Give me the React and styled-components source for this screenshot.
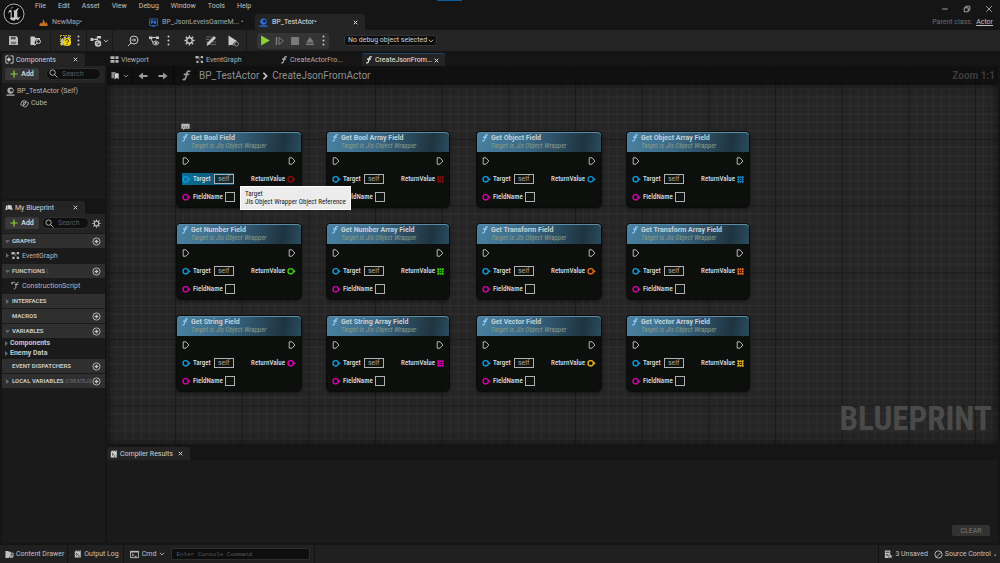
import React, { useState } from 'react'
import styled, { createGlobalStyle, css } from 'styled-components'

const GlobalStyle = createGlobalStyle`
  * {
    box-sizing: border-box;
  }

  html, body, #root {
    height: 100%;
    margin: 0;
  }

  body {
    background: #151515;
    color: #c0c0c0;
    font-family: Roboto, "Liberation Sans", sans-serif;
    font-size: 7px;
    line-height: 8px;
    overflow: hidden;
  }

  button, input, select {
    font: inherit;
    color: inherit;
    margin: 0;
    padding: 0;
    border: 0;
    background: none;
  }

  input::placeholder {
    color: #5a5a5a;
    opacity: 1;
  }

  svg {
    display: block;
    flex: none;
  }
`

const condensed = '"Roboto Condensed", "Liberation Sans Narrow", Roboto, sans-serif'

/* ---------- icons ---------- */

const Svg = ({ size = 10, h, box = '0 0 20 20', children }) => (
    <svg width={size} height={h || size} viewBox={box} fill="none" stroke="currentColor" strokeWidth="2" aria-hidden="true">
        {children}
    </svg>
)

const UnrealLogo = () => (
    <Svg size={22} box="0 0 66 66">
        <circle cx="33" cy="33" r="30" fill="#0c0c0c" stroke="#b0b0b0" strokeWidth="3" />
        <path
            d="M32 13C24 16 16 23 15 33c3-6 6-7 8-5v15c0 3-2 4-4 3 4 5 9 7 15 7l5-5 5 4c4-3 7-7 8-13-4 5-7 6-9 3V24c1-4 3-7 6-9-6 1-10 4-13 8-2-2-4-1-5 0 2 1 2 2 2 5v14c-2 3-7 2-7-1V26c0-4-2-6-5-5 1-3 3-6 6-8z"
            fill="#c8c8c8"
            stroke="none"
        />
    </Svg>
)

const ChevronDown = ({ size = 7 }) => <Svg size={size}><path d="M3 6l7 7 7-7" strokeWidth="3" /></Svg>
const CloseIcon = ({ size = 5 }) => <Svg size={size}><path d="M3 3l14 14M17 3L3 17" strokeWidth="4" /></Svg>
const DotsIcon = () => (
    <Svg size={3} h={11} box="0 0 6 22">
        <g fill="currentColor" stroke="none">
            <circle cx="3" cy="3" r="2" /><circle cx="3" cy="11" r="2" /><circle cx="3" cy="19" r="2" />
        </g>
    </Svg>
)
const LandscapeIcon = () => (
    <Svg size={9}><path d="M1 18v-4l4-4 2 3 3-11 4 11 2-4 3 5v4z" fill="#c9701a" stroke="none" /></Svg>
)
const LevelIcon = () => (
    <Svg size={9}>
        <rect x="1" y="2" width="18" height="15" rx="1" stroke="#2f63c8" />
        <path d="M5 13V6h4v4H5M12 6v7M15 6v7M12 10h3M7 18h6" stroke="#3d7cf0" />
    </Svg>
)
const ActorIcon = ({ color = '#2f6fe0', size = 9 }) => (
    <Svg size={size}>
        <circle cx="10" cy="8" r="7" fill={color} stroke="none" />
        <circle cx="12" cy="7" r="3" fill="#16191f" stroke="none" />
        <path d="M1 18h18" stroke={color} strokeWidth="3" />
    </Svg>
)
const SaveIcon = () => (
    <Svg size={11}>
        <path d="M2 2h13l3 3v13H2z" fill="currentColor" stroke="none" />
        <path d="M5 3h9v5H5z" fill="#555" stroke="none" />
        <path d="M5 12h10v5H5z" fill="#777" stroke="none" />
    </Svg>
)
const BrowseIcon = () => (
    <Svg size={12} box="0 0 24 22">
        <path d="M1 2h8l2 3h9v4a6 6 0 0 0-8 10H1z" fill="currentColor" stroke="none" />
        <circle cx="17" cy="12" r="4" />
        <path d="M14 15l-5 5" />
    </Svg>
)
const CompileIcon = () => (
    <Svg size={13} box="0 0 26 26">
        <path d="M3 3h20v19H3z" stroke="#d6b91c" strokeDasharray="3 2" />
        <path d="M4 22V11l5-4v15zM10 9V5h4v4zM17 5h5v4h-5z" fill="#b9b9b9" stroke="none" />
        <circle cx="16" cy="16" r="8" fill="#f2cf12" stroke="none" />
        <path d="M13 14c0-4 6-4 6 0 0 2-3 2-3 4M16 20v2" stroke="#222" />
    </Svg>
)
const DiffIcon = () => (
    <Svg size={13} h={12} box="0 0 26 24">
        <path d="M7 9h3l4-4M10 9h6" />
        <path d="M1 6h6v6H1zM14 2h8v5h-8z" fill="currentColor" stroke="none" />
        <circle cx="16" cy="17" r="5" strokeWidth="3" />
        <path d="M12 20l8-7" strokeWidth="3" />
    </Svg>
)
const FindIcon = () => (
    <Svg size={12} box="0 0 24 24">
        <circle cx="14" cy="10" r="8" />
        <path d="M8 16l-6 6M9 10h8M14 7l3 3-3 3" />
    </Svg>
)
const HideIcon = () => (
    <Svg size={12} box="0 0 24 24">
        <path d="M2 3h7v5H2zM16 3h6v5h-6z" fill="currentColor" stroke="none" />
        <path d="M9 5h7M6 8l4 7" />
        <path d="M9 16c3-5 10-5 13 0-3 5-10 5-13 0z" />
        <circle cx="16" cy="16" r="2" fill="currentColor" />
    </Svg>
)
const GearIcon = ({ size = 11 }) => (
    <Svg size={size} box="0 0 24 24">
        <circle cx="12" cy="12" r="6" strokeWidth="3" />
        <path d="M12 1v4M12 19v4M1 12h4M19 12h4M4 4l3 3M17 17l3 3M4 20l3-3M17 7l3-3" strokeWidth="3" />
    </Svg>
)
const DefaultsIcon = () => (
    <Svg size={12} box="0 0 24 24">
        <path d="M2 4h12M2 9h7M2 14h4M14 14h8M11 19h11" stroke="#666" />
        <path d="M3 22l2-7L18 2l4 4L9 19z" fill="currentColor" stroke="none" />
    </Svg>
)
const SimulateIcon = () => (
    <Svg size={12} box="0 0 24 24">
        <path d="M3 1l17 11-7 4v3l-10 2z" fill="currentColor" stroke="none" />
        <circle cx="19" cy="18" r="4" fill="#242424" stroke="#888" />
        <path d="M11 20h4" stroke="#888" />
    </Svg>
)
const PlayIcon = () => <Svg size={11}><path d="M2 1l16 9-16 9z" fill="#8bd233" stroke="none" /></Svg>
const StepIcon = () => <Svg size={10}><path d="M3 2v16" strokeWidth="3" /><path d="M8 3l9 7-9 7z" /></Svg>
const StopIcon = () => <Svg size={10}><path d="M2 2h16v16H2z" fill="currentColor" stroke="none" /></Svg>
const EjectIcon = () => <Svg size={10}><path d="M10 2l8 11H2zM2 15h16v3H2z" fill="currentColor" stroke="none" /></Svg>
const ComponentsIcon = () => (
    <Svg size={9}>
        <path d="M8 2H2v16h6M12 2h6v16h-6" />
        <path d="M6 10h7M10 6l-4 4 4 4" strokeWidth="3" />
    </Svg>
)
const PlusIcon = () => <Svg size={8}><path d="M10 1v18M1 10h18" stroke="#8bd233" strokeWidth="3" /></Svg>
const SearchIcon = () => <Svg size={9}><circle cx="8" cy="8" r="6" /><path d="M12 12l7 7" /></Svg>
const CubeIcon = () => (
    <Svg size={9}>
        <path d="M1 12l4-7 5-2 4 3-3 6-5 3zM7 15l3 3 5-2 4-7-4-3M5 5l4 3 5-2M9 8l-3 7" />
    </Svg>
)
const BookIcon = () => (
    <Svg size={8}><path d="M1 15l2-11h4l-1 11zM7 13l1-11 4 1v10zM12 14V3h4l3 12z" fill="currentColor" stroke="none" /></Svg>
)
const AddCircleIcon = () => (
    <Svg size={9}><circle cx="10" cy="10" r="8" /><path d="M10 6v8M6 10h8" strokeWidth="3" /></Svg>
)
const GraphIcon = () => (
    <Svg size={9}>
        <path d="M1 2h7v6H1zM13 2h5v5h-5zM3 13h5v5H3zM13 13h5v5h-5z" fill="currentColor" stroke="none" />
        <path d="M8 5h5M8 6l5 8" strokeDasharray="2 2" />
    </Svg>
)
const ViewportIcon = () => (
    <Svg size={9}><path d="M1 3h9v6H1zM12 3h7v6h-7zM1 11h9v6H1zM12 11h7v6h-7z" fill="currentColor" stroke="none" /></Svg>
)
const FunctionIcon = ({ size = 8 }) => (
    <Svg size={size}><path d="M17 3c-4-3-6 0-7 5-1 6-2 11-7 9M5 8h10" strokeWidth="3" /></Svg>
)
const ScriptIcon = () => (
    <Svg size={9}><path d="M2 5c3-3 5-3 8 0M17 3c-5 1-6 5-6 8 0 4-1 7-5 7M8 8h8" /><path d="M1 3h3v4H1z" fill="currentColor" stroke="none" /></Svg>
)
const BookmarkIcon = () => (
    <Svg size={9}><path d="M1 2h9v3H7v11H1z" fill="#888" stroke="none" /><path d="M8 5h9v14l-4-4-5 4z" fill="#d0d0d0" stroke="none" /></Svg>
)
const ArrowIcon = ({ right }) => (
    <Svg size={10}>
        <path
            d={right ? 'M1 8h9V3l9 7-9 7v-5H1z' : 'M19 8h-9V3l-9 7 9 7v-5h9z'}
            fill="currentColor"
            stroke="none"
        />
    </Svg>
)
const LogIcon = () => (
    <Svg size={8}>
        <path d="M2 4h2V1h3v3h2V1h3v3h2V1h3v18H2z" fill="currentColor" stroke="none" />
        <path d="M5 8l4 3-4 3M10 15h4" stroke="#222" />
    </Svg>
)
const DrawerIcon = () => (
    <Svg size={9}>
        <path d="M1 2h6l2 2h4v5l-4 9H1z" fill="currentColor" stroke="none" />
        <path d="M10 7h8v8h-6z" /><circle cx="14" cy="14" r="3" />
    </Svg>
)
const CmdIcon = () => (
    <Svg size={9}><path d="M1 3h18v14H1z" /><path d="M1 4h18" strokeWidth="3" /><path d="M4 8l4 3-4 3M10 14h5" /></Svg>
)
const UnsavedIcon = () => (
    <Svg size={9}>
        <path d="M2 1h12v9l-4 8H2z" fill="currentColor" stroke="none" />
        <path d="M4 5h8M4 11h5" stroke="#222" />
        <path d="M14 8l2 4h4l-3 3 1 4-4-2-4 2 1-4-3-3h4z" fill="currentColor" stroke="#222" strokeWidth="1" />
    </Svg>
)
const SourceIcon = () => <Svg size={9}><circle cx="10" cy="10" r="8" /><path d="M5 16L16 5" /></Svg>
const ResizeIcon = () => <Svg size={3}><path d="M20 4v16H4z" fill="#777" stroke="none" /></Svg>
const CommentIcon = () => (
    <Svg size={9} h={8} box="0 0 27 24">
        <path d="M1 2h25v15H11l-3 5-2-5H1z" fill="#b8b8b8" stroke="none" />
        <path d="M6 12h3M12 12h3M18 12h3" stroke="#444" strokeWidth="3" />
    </Svg>
)
const ExecPin = () => (
    <Svg size={8}><path d="M3 2h7l7 8-7 8H3z" stroke="#e0e0e0" strokeLinejoin="round" /></Svg>
)
const RoundPin = ({ color }) => (
    <Svg size={9} box="0 0 27 27">
        <circle cx="11" cy="13" r="8" stroke={color} strokeWidth="4" />
        <path d="M20 8l6 5-6 5z" fill={color} stroke="none" />
    </Svg>
)
const ArrayPin = ({ color }) => (
    <Svg size={7} box="0 0 21 21">
        <g fill={color} stroke="none">
            <path d="M1 1h5v5H1zM8 1h5v5H8zM15 1h5v5h-5zM1 8h5v5H1zM15 8h5v5h-5zM1 15h5v5H1zM8 15h5v5H8zM15 15h5v5h-5z" />
            <path d="M3 3h15v15H3zM7 7v7h7V7z" fillRule="evenodd" opacity="0.6" />
            <path d="M9 9h3v3H9z" />
        </g>
    </Svg>
)

/* ---------- shell ---------- */

const Page = styled.div`
  height: 100vh;
  display: flex;
  flex-direction: column;
`

const Header = styled.header`
  position: relative;
  display: flex;
  height: 30px;

  .logo {
    padding: 3px;
  }

  .left {
    flex: 1;
    display: flex;
    flex-direction: column;
    justify-content: space-between;
    padding-left: 7px;
  }
`

const LoadingBar = styled.span`
  position: absolute;
  top: 0;
  left: 437px;
  width: 25px;
  height: 1px;
  background: #0f5c9c;
`

const Menu = styled.nav`
  display: flex;
  gap: 12px;
  padding-top: 2px;
`

const DocTabs = styled.div`
  display: flex;
`

const DocTab = styled.button`
  display: flex;
  align-items: center;
  gap: 4px;
  width: 110px;
  height: 16px;
  padding: 0 7px 0 4px;
  border-radius: 3px 3px 0 0;
  color: ${({ $active }) => ($active ? '#e0e0e0' : '#a8a8a8')};
  background: ${({ $active }) => ($active ? '#242424' : 'none')};

  svg:last-child:not(:first-child) {
    margin-left: auto;
  }
`

const WindowSide = styled.div`
  display: flex;
  flex-direction: column;
  align-items: flex-end;
  justify-content: space-between;
  padding: 5px 7px 4px 0;

  div {
    display: flex;
    gap: 14px;
  }

  p {
    margin: 0;
    color: #6c6c6c;
  }

  a {
    color: #c0c0c0;
    margin-left: 2px;
  }
`

const Toolbar = styled.div`
  display: flex;
  align-items: center;
  height: 21px;
  background: #242424;
`

const ToolGroup = styled.div`
  display: flex;
  align-items: center;
  height: 21px;
  gap: ${({ $gap }) => $gap || 0}px;
  padding: ${({ $pad }) => $pad};
  border-right: ${({ $line }) => ($line ? '1px solid #181818' : '0')};
`

const ToolButton = styled.button`
  display: flex;
  align-items: center;
  justify-content: center;
  width: ${({ $w }) => $w || 20}px;
  height: 16px;
  color: ${({ $dim }) => ($dim ? '#7a7a7a' : '#c8c8c8')};
`

const PlayGroup = styled.div`
  display: flex;
  gap: 1px;
  margin: 0 7px 0 10px;
  padding: 0 1px;
  background: #343434;
  border-radius: 3px;
`

const DebugSelect = styled.label`
  position: relative;
  display: flex;
  align-items: center;
  margin-left: 8px;

  select {
    appearance: none;
    width: 93px;
    height: 11px;
    padding: 0 3px;
    background: #0e0e0e;
    border: 1px solid #333;
    border-radius: 3px;
    line-height: 9px;
    color: #d0d0d0;
  }

  svg {
    position: absolute;
    right: 3px;
  }
`

const Main = styled.main`
  flex: 1;
  min-height: 0;
  display: grid;
  grid-template-columns: 103px minmax(0, 1fr);
  gap: 2px;
  padding: 2px;
`

const Sidebar = styled.aside`
  display: grid;
  grid-template-columns: minmax(0, 1fr);
  grid-template-rows: 3fr 7fr;
  gap: 2px;
  min-height: 0;
`

const Content = styled.section`
  display: flex;
  flex-direction: column;
  gap: 3px;
  min-width: 0;
`

const TabStrip = styled.div`
  display: flex;
  gap: 2px;
`

const PanelTab = styled.button`
  display: flex;
  align-items: center;
  gap: 2px;
  width: 83px;
  height: 13px;
  padding: 0 7px 0 3px;
  border-radius: 3px 3px 0 0;
  white-space: nowrap;
  color: ${({ $active }) => ($active ? '#d0d0d0' : '#b0b0b0')};
  background: ${({ $active }) => ($active ? '#242424' : 'none')};
  ${({ $focused }) => $focused && css`
    color: #e8e8e8;
    border-top: 1px solid #1c4468;
  `}

  svg:last-child:not(:first-child) {
    margin-left: auto;
  }
`

/* ---------- sidebar ---------- */

const Panel = styled.div`
  display: flex;
  flex-direction: column;
  flex: 1;
  min-height: 0;
`

const PanelTools = styled.div`
  display: flex;
  align-items: center;
  gap: ${({ $tight }) => ($tight ? 3 : 7)}px;
  height: ${({ $tight }) => ($tight ? 19 : 17)}px;
  padding: 0 4px ${({ $tight }) => ($tight ? 1 : 2)}px 3px;
  background: #242424;
`

const AddButton = styled.button`
  display: flex;
  flex: none;
  align-items: center;
  justify-content: center;
  gap: 3px;
  width: 34px;
  height: 12px;
  background: #383838;
  border-radius: 2px;
  color: #e0e0e0;
  font-weight: 500;
`

const SearchBox = styled.label`
  display: flex;
  align-items: center;
  gap: 4px;
  flex: 1;
  min-width: 0;
  height: 12px;
  padding: 0 2px;
  background: #0f0f0f;
  border: 1px solid #2e2e2e;
  border-radius: 6px;

  input {
    width: 100%;
    min-width: 0;
  }
`

const Tree = styled.div`
  flex: 1;
  padding: 2px 0;
  background: #1a1a1a;
`

const TreeRow = styled.div`
  display: flex;
  align-items: center;
  gap: 2px;
  height: ${({ $h }) => $h || 12}px;
  padding-left: ${({ $indent }) => $indent || 4}px;
  font-weight: ${({ $bold }) => ($bold ? 700 : 400)};
  color: ${({ $bold }) => ($bold ? '#c8c8c8' : '#b8b8b8')};
`

const Sections = styled.div`
  flex: 1;
  background: #1a1a1a;
`

const SectionHead = styled.div`
  display: flex;
  align-items: center;
  gap: 3px;
  height: 14px;
  margin-top: 1px;
  padding: 0 4px 0 3px;
  background: #2f2f2f;
  color: #c4c4c4;
  font-size: 6px;
  font-weight: 700;

  .name {
    flex: 1;
    min-width: 0;
    white-space: nowrap;
  }

  em {
    color: #707070;
    font-family: ${condensed};
    font-style: normal;
    font-weight: 400;
  }

  button {
    color: #c0c0c0;
  }
`

const Twisty = styled.span`
  flex: none;
  width: 4px;
  color: #6a6a6a;
`

const Arrow = ({ open, hidden }) => (
    <Twisty>
        {!hidden && (
            <Svg size={5}>
                <path d={open ? 'M0 5h20L10 16z' : 'M4 0v20l12-10z'} fill="currentColor" stroke="none" />
            </Svg>
        )}
    </Twisty>
)

/* ---------- graph ---------- */

const GraphPanel = styled.div`
  position: relative;
  flex: 1;
  display: flex;
  flex-direction: column;
  overflow: hidden;
  background: #252525;

  .grid {
    position: absolute;
    inset: 0;
  }
`

const Breadcrumb = styled.div`
  position: relative;
  display: flex;
  align-items: center;
  height: 19px;
  padding-right: 3px;
  background: rgba(10, 10, 10, 0.75);
  color: #8f8f8f;
  font-size: 10px;
  line-height: 12px;

  .chevron {
    margin: 0 3px 0 2px;
    color: #d0d0d0;
  }

  .zoom {
    margin-left: auto;
    color: #3c3c3c;
    font-weight: 700;
  }
`

const CrumbGroup = styled.div`
  display: flex;
  align-items: center;
  justify-content: center;
  gap: ${({ $gap }) => $gap}px;
  width: ${({ $w }) => $w}px;
  height: 19px;
  border-right: ${({ $line }) => ($line ? '1px solid #070707' : '0')};
  color: #9a9a9a;

  button {
    display: flex;
    align-items: center;
    gap: 3px;
  }
`

const Canvas = styled.div`
  position: relative;
  flex: 1;
  box-shadow: inset 0 0 14px rgba(0, 0, 0, 0.45);
`

const Watermark = styled.div`
  position: absolute;
  right: 6px;
  bottom: 5px;
  color: #4a4a4a;
  font-family: ${condensed};
  font-size: 33px;
  line-height: 40px;
  font-weight: 700;
`

const NodeBox = styled.article`
  position: absolute;
  left: ${({ $x }) => $x}px;
  top: ${({ $y }) => $y}px;
  width: ${({ $array }) => ($array ? 122 : 124)}px;
  padding-bottom: 1px;
  background: rgba(10, 13, 10, 0.92);
  border-radius: 4px;
  box-shadow: 0 0 0 1px #0b0b0b, 0 1px 4px rgba(0, 0, 0, 0.7);
  color: #dcdcdc;
  font-family: ${condensed};
`

const NodeHead = styled.header`
  display: flex;
  gap: 2px;
  height: 20px;
  padding: 2px 4px;
  border-radius: 4px 4px 0 0;
  background: linear-gradient(100deg, #4a80a0 0%, #3b6a88 40%, #1f3440 85%, #2a4c60 100%);
  box-shadow: inset 0 1px 0 #5c8ca8;
  color: #8ccbf5;

  h3 {
    margin: 0;
    font-family: Roboto, sans-serif;
    font-size: 7px;
    font-weight: 700;
    color: #c4d0d6;
  }

  p {
    margin: 0;
    font-style: italic;
    color: #8a9c84;
    white-space: nowrap;
  }
`

const PinRow = styled.div`
  display: flex;
  align-items: center;
  justify-content: space-between;
  height: 18px;
  padding: 0 5px;
`

const Pin = styled.label`
  display: flex;
  align-items: center;
  gap: 2px;
  height: 12px;
  font-weight: 500;
  ${({ $hover }) => $hover && css`
    background: linear-gradient(90deg, #0c6f98, #0b4c68);
  `}

  .label {
    min-width: 19px;
  }
`

const PinInput = styled.input`
  width: ${({ $w }) => $w}px;
  height: 10px;
  padding: 0 3px;
  border: 1px solid #b0b0b0;
  background: rgba(20, 24, 20, 0.6);
  color: #a8a8a8;
  font-family: Roboto, sans-serif;
  font-weight: 400;
  line-height: 8px;
`

const Bubble = styled.div`
  position: absolute;
  left: 74px;
  top: 38px;
`

const Tooltip = styled.div`
  position: absolute;
  left: 133px;
  top: 101px;
  padding: 3px 4px;
  border: 1px solid #fff;
  background: #ececec;
  color: #222;
  font-family: ${condensed};
  white-space: nowrap;
`

/* ---------- bottom ---------- */

const Results = styled.div`
  flex: none;

  .body {
    display: flex;
    justify-content: flex-end;
    align-items: flex-end;
    height: 83px;
    padding: 7px 8px;
    background: #1a1a1a;
  }
`

const ClearButton = styled.button`
  width: 38px;
  height: 11px;
  border-radius: 2px;
  background: #333;
  color: #777;
`

const StatusBar = styled.footer`
  display: flex;
  height: 18px;
  background: #202020;
`

const StatusItem = styled.div`
  display: flex;
  align-items: center;
  gap: ${({ $gap }) => $gap || 2}px;
  padding: ${({ $pad }) => $pad || '0 3px 0 5px'};
  border-right: ${({ $line }) => ($line ? '1px solid #131313' : '0')};
  border-left: ${({ $lineLeft }) => ($lineLeft ? '1px solid #131313' : '0')};
  margin-left: ${({ $lineLeft }) => ($lineLeft ? 'auto' : '0')};

  button {
    display: flex;
    align-items: center;
    gap: ${({ $btnGap }) => $btnGap || 2}px;
    white-space: nowrap;
  }
`

const ConsoleInput = styled.input`
  width: 139px;
  height: 12px;
  padding: 0 4px;
  background: #0e0e0e;
  border: 1px solid #2e2e2e;
  border-radius: 2px;
  font-family: "Liberation Mono", monospace;
  font-size: 6px;
`

const menuItems = ['File', 'Edit', 'Asset', 'View', 'Debug', 'Window', 'Tools', 'Help']

const nodes = [
    ['Bool', '#8e0d0d'],
    ['Object', '#0f8fd0'],
    ['Number', '#38d010'],
    ['Transform', '#e8691a'],
    ['String', '#e000b4'],
    ['Vector', '#e8b828'],
].flatMap(([type, color], i) => {
    const x = 70 + (i % 2) * 300
    const y = 47 + Math.floor(i / 2) * 92
    return [
        { title: `Get ${type} Field`, color, x, y },
        { title: `Get ${type} Array Field`, color, x: x + 150, y, array: true },
    ]
})

function Node({ title, color, x, y, array, hover }) {
    const [target, setTarget] = useState('self')
    const [field, setField] = useState('')

    return (
        <NodeBox $x={x} $y={y} $array={array}>
            <NodeHead>
                <FunctionIcon />
                <div>
                    <h3>{title}</h3>
                    <p>Target is Jls Object Wrapper</p>
                </div>
            </NodeHead>
            <PinRow>
                <ExecPin />
                <ExecPin />
            </PinRow>
            <PinRow>
                <Pin $hover={hover}>
                    <RoundPin color="#0f9be0" />
                    <span className="label">Target</span>
                    <PinInput $w={20} value={target} onChange={e => setTarget(e.target.value)} />
                </Pin>
                <Pin as="span">
                    ReturnValue
                    {array ? <ArrayPin color={color} /> : <RoundPin color={color} />}
                </Pin>
            </PinRow>
            <PinRow>
                <Pin>
                    <RoundPin color="#d800b0" />
                    <span className="label">FieldName</span>
                    <PinInput $w={10} value={field} onChange={e => setField(e.target.value)} />
                </Pin>
            </PinRow>
        </NodeBox>
    )
}

const Section = ({ name, extra, open, noArrow, noAdd, children }) => (
    <>
        <SectionHead>
            <Arrow open={open} hidden={noArrow} />
            <span className="name">{name} {extra && <em>{extra}</em>}</span>
            {!noAdd && <button aria-label={`Add ${name}`}><AddCircleIcon /></button>}
        </SectionHead>
        {children}
    </>
)

function App() {
    return (
        <Page>
            <GlobalStyle />
            <Header>
                <div className="logo"><UnrealLogo /></div>
                <div className="left">
                    <Menu>
                        {menuItems.map(item => <button key={item}>{item}</button>)}
                    </Menu>
                    <DocTabs>
                        <DocTab><LandscapeIcon />NewMap•</DocTab>
                        <DocTab><LevelIcon />BP_JsonLevelsGameM... •</DocTab>
                        <DocTab $active><ActorIcon />BP_TestActor•<CloseIcon /></DocTab>
                    </DocTabs>
                </div>
                <WindowSide>
                    <div>
                        <button aria-label="Minimize"><Svg size={8}><path d="M3 10h14" /></Svg></button>
                        <button aria-label="Restore"><Svg size={8}><path d="M3 7h10v10H3zM7 7V3h10v10h-4" /></Svg></button>
                        <button aria-label="Close"><Svg size={8}><path d="M3 3l14 14M17 3L3 17" /></Svg></button>
                    </div>
                    <p>Parent class: <a href="#actor">Actor</a></p>
                </WindowSide>
                <LoadingBar />
            </Header>

            <Toolbar>
                <ToolGroup $pad="0 4px 0 3px" $gap={3} $line>
                    <ToolButton aria-label="Save"><SaveIcon /></ToolButton>
                    <ToolButton aria-label="Browse"><BrowseIcon /></ToolButton>
                </ToolGroup>
                <ToolGroup $pad="0 5px 0 4px" $line>
                    <ToolButton aria-label="Compile"><CompileIcon /></ToolButton>
                    <ToolButton $w={6} aria-label="Compile options"><DotsIcon /></ToolButton>
                </ToolGroup>
                <ToolGroup $pad="0 2px" $line>
                    <ToolButton $w={21} aria-label="Diff"><DiffIcon /><ChevronDown size={6} /></ToolButton>
                </ToolGroup>
                <ToolGroup $pad="0 0 0 10px" $gap={1}>
                    <ToolButton aria-label="Find"><FindIcon /></ToolButton>
                    <ToolButton aria-label="Hide unrelated"><HideIcon /></ToolButton>
                    <ToolButton $w={6} aria-label="Hide options"><DotsIcon /></ToolButton>
                </ToolGroup>
                <ToolGroup $pad="0 3px 0 8px" $gap={2} $line>
                    <ToolButton aria-label="Class settings"><GearIcon /></ToolButton>
                    <ToolButton aria-label="Class defaults"><DefaultsIcon /></ToolButton>
                    <ToolButton aria-label="Simulation"><SimulateIcon /></ToolButton>
                </ToolGroup>
                <PlayGroup>
                    <ToolButton $w={14} aria-label="Play"><PlayIcon /></ToolButton>
                    <ToolButton $w={14} $dim aria-label="Step"><StepIcon /></ToolButton>
                    <ToolButton $w={14} $dim aria-label="Stop"><StopIcon /></ToolButton>
                    <ToolButton $w={14} $dim aria-label="Eject"><EjectIcon /></ToolButton>
                    <ToolButton $w={10} aria-label="Play options"><DotsIcon /></ToolButton>
                </PlayGroup>
                <DebugSelect>
                    <select aria-label="Debug object">
                        <option>No debug object selected</option>
                    </select>
                    <ChevronDown size={6} />
                </DebugSelect>
            </Toolbar>

            <Main>
                <Sidebar>
                    <Panel>
                        <TabStrip>
                            <PanelTab $active><ComponentsIcon />Components<CloseIcon /></PanelTab>
                        </TabStrip>
                        <PanelTools>
                            <AddButton><PlusIcon />Add</AddButton>
                            <SearchBox><SearchIcon /><input placeholder="Search" aria-label="Search components" /></SearchBox>
                        </PanelTools>
                        <Tree>
                            <TreeRow><ActorIcon color="#a8a8a8" />BP_TestActor (Self)</TreeRow>
                            <TreeRow $indent={18}><CubeIcon />Cube</TreeRow>
                        </Tree>
                    </Panel>
                    <Panel>
                        <TabStrip>
                            <PanelTab $active><BookIcon />My Blueprint<CloseIcon /></PanelTab>
                        </TabStrip>
                        <PanelTools $tight>
                            <AddButton><PlusIcon />Add</AddButton>
                            <SearchBox><SearchIcon /><input placeholder="Search" aria-label="Search blueprint" /></SearchBox>
                            <button aria-label="Settings"><GearIcon size={9} /></button>
                        </PanelTools>
                        <Sections>
                            <Section name="GRAPHS" open>
                                <TreeRow $h={15} $indent={3}><Arrow /><GraphIcon />EventGraph</TreeRow>
                            </Section>
                            <Section name="FUNCTIONS" extra="(:" open>
                                <TreeRow $h={15} $indent={9}><ScriptIcon />ConstructionScript</TreeRow>
                            </Section>
                            <Section name="INTERFACES" noAdd />
                            <Section name="MACROS" noArrow />
                            <Section name="VARIABLES" open>
                                <TreeRow $h={10} $indent={2} $bold><Arrow />Components</TreeRow>
                                <TreeRow $h={10} $indent={2} $bold><Arrow />Enemy Data</TreeRow>
                            </Section>
                            <Section name="EVENT DISPATCHERS" noArrow />
                            <Section name="LOCAL VARIABLES" extra="(CREATEJS" />
                        </Sections>
                    </Panel>
                </Sidebar>

                <Content>
                    <Panel>
                        <TabStrip>
                            <PanelTab><ViewportIcon />Viewport</PanelTab>
                            <PanelTab><GraphIcon />EventGraph</PanelTab>
                            <PanelTab><FunctionIcon />CreateActorFro...</PanelTab>
                            <PanelTab $active $focused><FunctionIcon />CreateJsonFrom...<CloseIcon /></PanelTab>
                        </TabStrip>
                        <GraphPanel>
                            <svg className="grid" width="100%" height="100%" aria-hidden="true">
                                <defs>
                                    <pattern id="grid" x="4" y="19" width="200" height="200" patternUnits="userSpaceOnUse" patternTransform="scale(0.33333)">
                                        {[25, 50, 75, 100, 125, 150, 175].map(n => (
                                            <path key={n} d={`M${n} 0V200M0 ${n}H200`} stroke="#2e2e2e" strokeWidth="3" />
                                        ))}
                                        <path d="M1 0V200M0 1H200" stroke="#191919" strokeWidth="3" />
                                    </pattern>
                                </defs>
                                <rect width="100%" height="100%" fill="url(#grid)" />
                            </svg>
                            <Breadcrumb>
                                <CrumbGroup $w={26} $line>
                                    <button aria-label="Bookmarks"><BookmarkIcon /><ChevronDown size={6} /></button>
                                </CrumbGroup>
                                <CrumbGroup $w={41} $gap={10} $line>
                                    <button aria-label="Back"><ArrowIcon /></button>
                                    <button aria-label="Forward"><ArrowIcon right /></button>
                                </CrumbGroup>
                                <CrumbGroup $w={25}><FunctionIcon size={11} /></CrumbGroup>
                                <span>BP_TestActor</span>
                                <span className="chevron"><Svg size={8}><path d="M6 2l8 8-8 8" strokeWidth="4" /></Svg></span>
                                <span>CreateJsonFromActor</span>
                                <span className="zoom">Zoom 1:1</span>
                            </Breadcrumb>
                            <Canvas>
                                <Watermark>BLUEPRINT</Watermark>
                                <Bubble><CommentIcon /></Bubble>
                                {nodes.map((node, i) => <Node key={node.title} {...node} hover={i === 0} />)}
                                <Tooltip role="tooltip">Target<br />Jls Object Wrapper Object Reference</Tooltip>
                            </Canvas>
                        </GraphPanel>
                    </Panel>
                    <Results>
                        <TabStrip>
                            <PanelTab $active><LogIcon />Compiler Results<CloseIcon /></PanelTab>
                        </TabStrip>
                        <div className="body"><ClearButton>CLEAR</ClearButton></div>
                    </Results>
                </Content>
            </Main>

            <StatusBar>
                <StatusItem $line><button><DrawerIcon />Content Drawer</button></StatusItem>
                <StatusItem $line $pad="0 4px 0 6px"><button><LogIcon />Output Log</button></StatusItem>
                <StatusItem $line $pad="0 4px 0 6px" $gap={6} $btnGap={3}>
                    <button><CmdIcon />Cmd <ChevronDown size={6} /></button>
                    <ConsoleInput placeholder="Enter Console Command" aria-label="Console command" />
                </StatusItem>
                <StatusItem $lineLeft $gap={6} $pad="0 4px 0 5px">
                    <button><UnsavedIcon />3 Unsaved</button>
                    <button><SourceIcon />Source Control<ResizeIcon /></button>
                </StatusItem>
            </StatusBar>
        </Page>
    )
}

export default App
